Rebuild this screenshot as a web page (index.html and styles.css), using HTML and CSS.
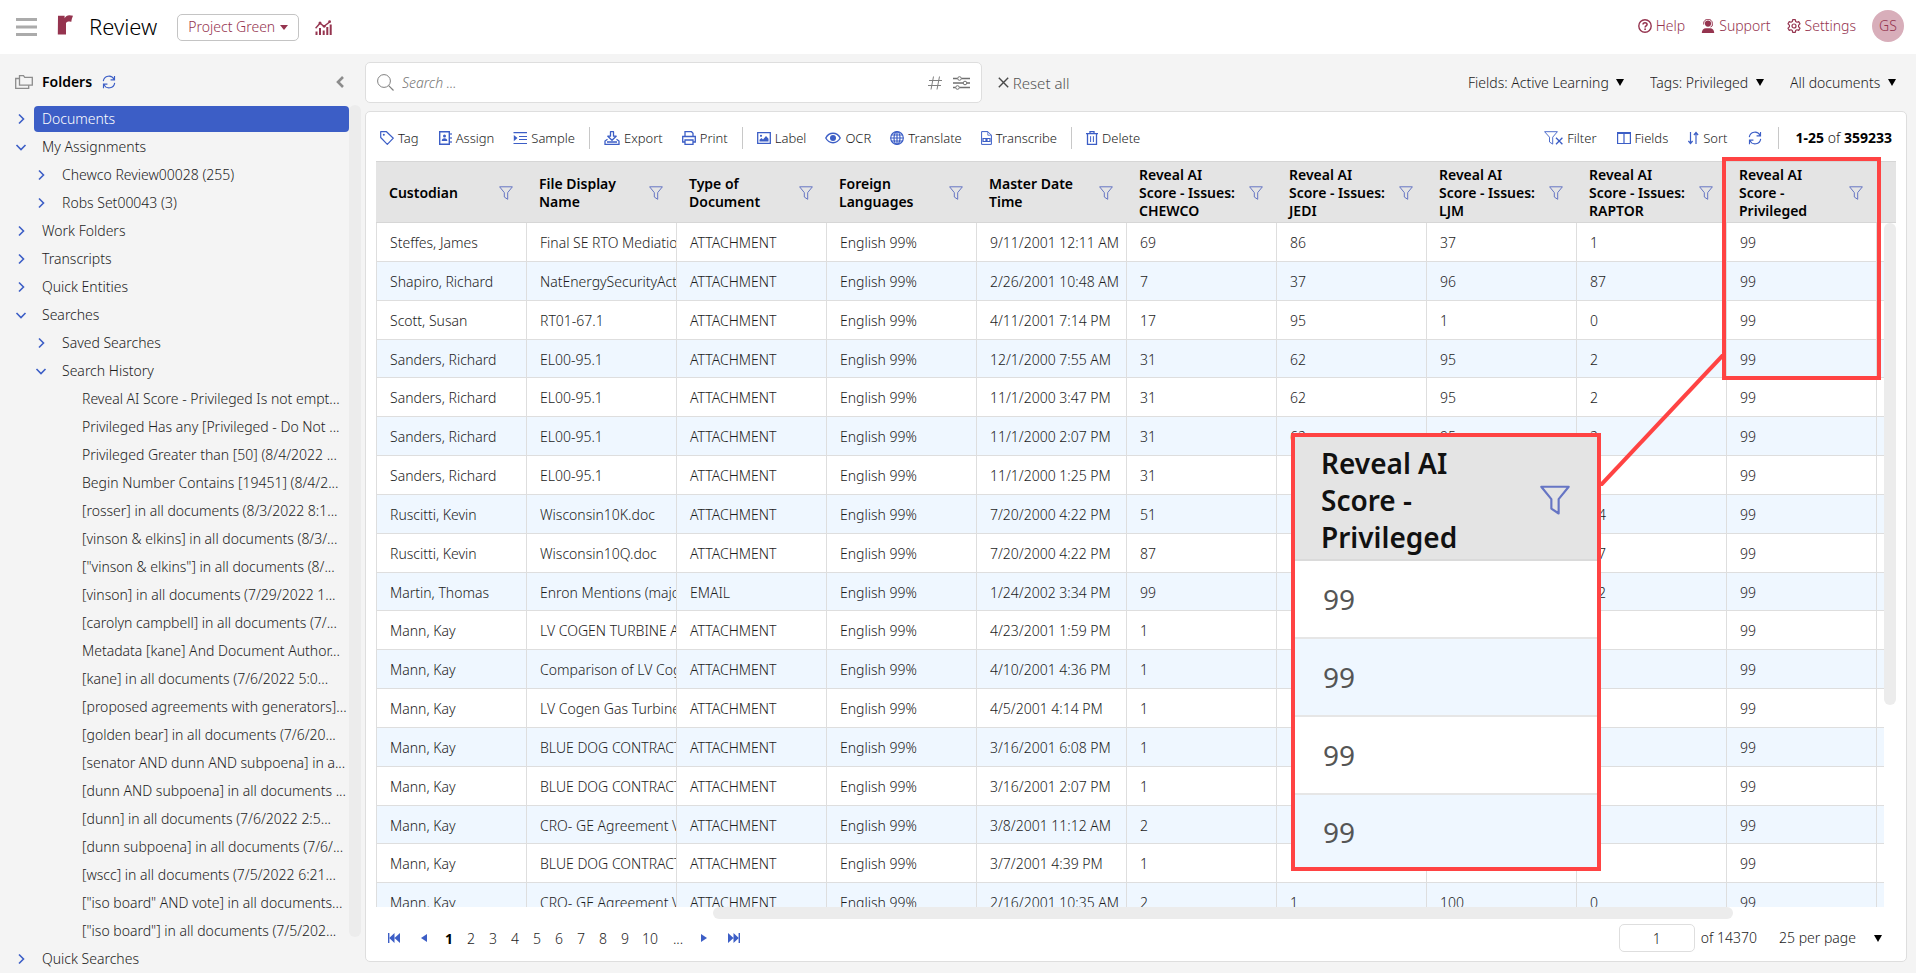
FILE: index.html
```html
<!DOCTYPE html>
<html lang="en">
<head>
<meta charset="utf-8">
<meta name="viewport" content="width=device-width, initial-scale=1">
<title>Review - Project Green</title>
<link rel="stylesheet" href="styles.css">
</head>
<body>
<svg class="sprite" aria-hidden="true">
  <symbol id="i-right" viewBox="0 0 14 14"><path d="M5 2.5 9.5 7 5 11.5" fill="none" stroke="currentColor" stroke-width="1.6"/></symbol>
  <symbol id="i-down" viewBox="0 0 14 14"><path d="M2.5 5 7 9.5 11.500 5" fill="none" stroke="currentColor" stroke-width="1.6"/></symbol>
  <symbol id="i-caret" viewBox="0 0 8 7"><path d="M0 0h8L4 7z" fill="currentColor"/></symbol>
  <symbol id="i-funnel" viewBox="0 0 14 14"><path d="M.6.8h12.800L8.700 6.600v6.700L5.300 11V6.600z" fill="none" stroke="currentColor" stroke-width="1" stroke-linejoin="round"/></symbol>
  <symbol id="i-refresh" viewBox="0 0 16 16"><path d="M1.500 7A6.500 6.500 0 0 1 13.800 5M14.500 9A6.500 6.500 0 0 1 2.200 11M14.300 1v4.500H9.800M1.700 15v-4.500h4.500" fill="none" stroke="currentColor" stroke-width="1.3"/></symbol>
</svg>

<div class="app">
  <header class="topbar">
    <button class="icon-btn" type="button" aria-label="Menu"><svg class="menu-icon" viewBox="0 0 21 18"><path d="M0 1.500h21M0 9h21M0 16.500h21" stroke="#ababab" stroke-width="3"/></svg></button>
    <svg class="logo" viewBox="0 0 16 20" role="img" aria-label="Reveal"><path d="M1 .8h6.600v2.500C8.600 1.200 10.300.2 12.300.2c1.400 0 2.700.2 3.700.5-.9 2-1.500 3.900-1.800 6.200C12.400 6.200 10.400 6.300 9 8v11.600H.8z" fill="#95344f"/></svg>
    <h1 class="app-name">Review</h1>
    <span class="project">
      <select aria-label="Project"><option>Project Green</option></select>
      <svg viewBox="0 0 8 5"><path d="M0 0h8L4 5z" fill="#95344f"/></svg>
    </span>
    <button class="icon-btn" type="button" aria-label="Dashboard"><svg class="chart-icon" viewBox="0 0 17 15"><path d="M1.500 15v-3.500M5 15V8M8.700 15v-4.500M12.300 15V7M15.700 15V4.500" stroke="#95344f" stroke-width="2" fill="none"/><path d="M.6 8.200 5 3.200l4 3.200 6-4.600" stroke="#95344f" stroke-width="1.400" fill="none"/><circle cx="5" cy="3" r="1.500" fill="#95344f"/><circle cx="9.200" cy="6.300" r="1.400" fill="#95344f"/><circle cx="14.600" cy="1.700" r="1.400" fill="#95344f"/></svg></button>
    <nav class="user-nav" aria-label="User">
      <a href="#help"><svg class="i14" viewBox="0 0 14 14"><circle cx="7" cy="7" r="6.200" fill="none" stroke="currentColor" stroke-width="1.400"/><path d="M5 5.600C5 4.300 5.900 3.700 7 3.700s2.100.7 2.100 1.800c0 1.400-2 1.500-2 2.900" fill="none" stroke="currentColor" stroke-width="1.500"/><circle cx="7.100" cy="10.200" r=".9" fill="currentColor"/></svg>Help</a>
      <a href="#support"><svg class="i14" viewBox="0 0 14 14"><circle cx="7" cy="4.600" r="3.100" fill="currentColor"/><path d="M2.700 5.500V4.200a4.300 4 0 0 1 8.600 0v2.600L9.500 8" fill="none" stroke="currentColor" stroke-width="1"/><path d="M.8 14c0-3.200 1.700-4.800 4.200-4.800h4c2.500 0 4.200 1.600 4.200 4.800z" fill="currentColor"/></svg>Support</a>
      <a href="#settings"><svg class="i14" viewBox="0 0 14 14"><path d="M5.700.7h2.600l.4 1.800 1.300.7 1.700-.6 1.300 2.300-1.400 1.200v1.800l1.400 1.200-1.300 2.300-1.700-.6-1.300.7-.4 1.800H5.700l-.4-1.800-1.300-.7-1.700.6L1 9.100l1.400-1.200V6.100L1 4.900l1.300-2.300 1.700.6 1.300-.7z" fill="none" stroke="currentColor" stroke-width="1.200" stroke-linejoin="round"/><circle cx="7" cy="7" r="2" fill="none" stroke="currentColor" stroke-width="1.200"/></svg>Settings</a>
      <button class="avatar" type="button" aria-label="Account GS">GS</button>
    </nav>
  </header>

  <div class="workspace">
    <aside class="sidebar">
      <div class="side-head">
        <svg class="folders-icon" viewBox="0 0 18 14"><path d="M4.500.7h4l1.200 1.600h7.600v7.900H4.500z" fill="none" stroke="#8c8c8c" stroke-width="1.300"/><path d="M4.500 3.500H.7v9.800h13v-3" fill="none" stroke="#8c8c8c" stroke-width="1.300"/></svg>
        <h2>Folders</h2>
        <button class="icon-btn blue" type="button" aria-label="Refresh folders"><svg class="i14"><use href="#i-refresh"/></svg></button>
        <button class="icon-btn collapse" type="button" aria-label="Collapse"><svg viewBox="0 0 8 12"><path d="M7 1 2 6l5 5" fill="none" stroke="#8c8c8c" stroke-width="2.600"/></svg></button>
      </div>
      <div class="tree-wrap">
        <ul class="tree">
          <li><div class="node"><button type="button" aria-label="Expand"><svg><use href="#i-right"/></svg></button><a class="active" href="#n">Documents</a></div></li>
          <li><div class="node"><button type="button" aria-label="Collapse"><svg><use href="#i-down"/></svg></button><a href="#n">My Assignments</a></div>
            <ul>
              <li><div class="node"><button type="button" aria-label="Expand"><svg><use href="#i-right"/></svg></button><a href="#n">Chewco Review00028 (255)</a></div></li>
              <li><div class="node"><button type="button" aria-label="Expand"><svg><use href="#i-right"/></svg></button><a href="#n">Robs Set00043 (3)</a></div></li>
            </ul>
          </li>
          <li><div class="node"><button type="button" aria-label="Expand"><svg><use href="#i-right"/></svg></button><a href="#n">Work Folders</a></div></li>
          <li><div class="node"><button type="button" aria-label="Expand"><svg><use href="#i-right"/></svg></button><a href="#n">Transcripts</a></div></li>
          <li><div class="node"><button type="button" aria-label="Expand"><svg><use href="#i-right"/></svg></button><a href="#n">Quick Entities</a></div></li>
          <li><div class="node"><button type="button" aria-label="Collapse"><svg><use href="#i-down"/></svg></button><a href="#n">Searches</a></div>
            <ul>
              <li><div class="node"><button type="button" aria-label="Expand"><svg><use href="#i-right"/></svg></button><a href="#n">Saved Searches</a></div></li>
              <li><div class="node"><button type="button" aria-label="Collapse"><svg><use href="#i-down"/></svg></button><a href="#n">Search History</a></div>
                <ul class="leaves">
                  <li><a href="#n">Reveal AI Score - Privileged Is not empt...</a></li>
                  <li><a href="#n">Privileged Has any [Privileged - Do Not ...</a></li>
                  <li><a href="#n">Privileged Greater than [50] (8/4/2022 ...</a></li>
                  <li><a href="#n">Begin Number Contains [19451] (8/4/2...</a></li>
                  <li><a href="#n">[rosser] in all documents (8/3/2022 8:1...</a></li>
                  <li><a href="#n">[vinson &amp; elkins] in all documents (8/3/...</a></li>
                  <li><a href="#n">["vinson &amp; elkins"] in all documents (8/...</a></li>
                  <li><a href="#n">[vinson] in all documents (7/29/2022 1...</a></li>
                  <li><a href="#n">[carolyn campbell] in all documents (7/...</a></li>
                  <li><a href="#n">Metadata [kane] And Document Author...</a></li>
                  <li><a href="#n">[kane] in all documents (7/6/2022 5:0...</a></li>
                  <li><a href="#n">[proposed agreements with generators]...</a></li>
                  <li><a href="#n">[golden bear] in all documents (7/6/20...</a></li>
                  <li><a href="#n">[senator AND dunn AND subpoena] in a...</a></li>
                  <li><a href="#n">[dunn AND subpoena] in all documents ...</a></li>
                  <li><a href="#n">[dunn] in all documents (7/6/2022 2:5...</a></li>
                  <li><a href="#n">[dunn subpoena] in all documents (7/6/...</a></li>
                  <li><a href="#n">[wscc] in all documents (7/5/2022 6:21...</a></li>
                  <li><a href="#n">["iso board" AND vote] in all documents...</a></li>
                  <li><a href="#n">["iso board"] in all documents (7/5/202...</a></li>
                </ul>
              </li>
            </ul>
          </li>
          <li><div class="node"><button type="button" aria-label="Expand"><svg><use href="#i-right"/></svg></button><a href="#n">Quick Searches</a></div></li>
        </ul>
        <div class="tree-thumb"></div>
      </div>
    </aside>

    <main class="main">
      <div class="searchrow">
        <div class="searchbox">
          <svg class="search-icon" viewBox="0 0 17 17"><circle cx="7" cy="7" r="6.400" fill="none" stroke="#808080"/><path d="m11.700 11.700 4.800 4.800" stroke="#808080" stroke-width="1.200"/></svg>
          <input type="text" placeholder="Search ..." aria-label="Search">
          <button class="icon-btn" type="button" aria-label="Number search"><svg class="hash-icon" viewBox="0 0 14 14"><path d="M5.500.5 3 13.500M11.500.5 9 13.500M1 4.500h13M0 9.500h13" stroke="#808080" fill="none"/></svg></button>
          <button class="icon-btn" type="button" aria-label="Search options"><svg class="sliders-icon" viewBox="0 0 17 14"><path d="M0 2.500h4.500M8.500 2.500H17M0 7h10M14 7h3M0 11.500h2.500M6.500 11.500H17" stroke="#707070" stroke-width="1.300"/><g fill="none" stroke="#707070"><circle cx="6.500" cy="2.500" r="1.800"/><circle cx="12" cy="7" r="1.800"/><circle cx="4.500" cy="11.500" r="1.800"/></g></svg></button>
        </div>
        <button class="reset" type="button"><svg viewBox="0 0 11 11"><path d="m.8.8 9.400 9.400M10.200.8.8 10.200" stroke="#4a4a4a" stroke-width="1.400"/></svg>Reset all</button>
        <div class="pickers">
          <span class="picker"><select aria-label="Fields profile"><option>Fields: Active Learning</option></select><svg><use href="#i-caret"/></svg></span>
          <span class="picker"><select aria-label="Tags profile"><option>Tags: Privileged</option></select><svg><use href="#i-caret"/></svg></span>
          <span class="picker"><select aria-label="Scope"><option>All documents</option></select><svg><use href="#i-caret"/></svg></span>
        </div>
      </div>

      <section class="panel">
        <div class="toolbar">
          <div class="group">
            <button type="button"><svg viewBox="0 0 14 14"><path d="M.7.7h5.800l6.800 6.500-6 6.100L.7 6.500z" fill="none" stroke="currentColor" stroke-width="1.200" stroke-linejoin="round"/><circle cx="3.800" cy="3.800" r="1" fill="currentColor"/></svg>Tag</button>
            <button type="button"><svg viewBox="0 0 14 14"><path d="M1.700.7h9.600v12.600H1.700z" fill="none" stroke="currentColor" stroke-width="1.400"/><path d="M13 2v2M13 6v2M13 10v2" stroke="currentColor" stroke-width="1.200"/><circle cx="6.500" cy="5" r="1.500" fill="currentColor"/><path d="M3.700 10c0-2 1-2.800 2.800-2.800S9.300 8 9.300 10z" fill="currentColor"/></svg>Assign</button>
            <button type="button"><svg viewBox="0 0 14 14"><path d="M.5 1.700H14M6 5.500h8M6 8.500h8M.5 12.500H14" stroke="currentColor" stroke-width="1.200"/><path d="M.8 4v6.200L4.500 7z" fill="currentColor"/></svg>Sample</button>
          </div>
          <div class="group">
            <button type="button"><svg class="w16" viewBox="0 0 16 14"><path d="M6.500.7h3v4.500h2.700L8 9.300 3.800 5.200h2.700z" fill="none" stroke="currentColor" stroke-width="1.300" stroke-linejoin="round"/><path d="M3.500 8.200 1 10v3.300h14V10l-2.500-1.800M3 11h10" fill="none" stroke="currentColor" stroke-width="1.300"/></svg>Export</button>
            <button type="button"><svg viewBox="0 0 14 14"><path d="M3 5V.7h6.500L11 2.200V5M3 11H.7V5.500h12.600V11H11" fill="none" stroke="currentColor" stroke-width="1.300"/><path d="M3 9h8v4.300H3z" fill="none" stroke="currentColor" stroke-width="1.300"/></svg>Print</button>
          </div>
          <div class="group">
            <button type="button"><svg viewBox="0 0 14 14"><path d="M.7 1.700h12.600v10.600H.7z" fill="none" stroke="currentColor" stroke-width="1.300"/><circle cx="4" cy="4.800" r="1.100" fill="currentColor"/><path d="M2.500 10.500V8.700L4.500 7l1.500 1.500L9 5l2.500 2.800v2.700z" fill="currentColor"/></svg>Label</button>
            <button type="button"><svg class="w16" viewBox="0 0 16 14"><path d="M.8 7C2.500 3.800 5 2.300 8 2.300S13.500 3.800 15.200 7C13.500 10.200 11 11.700 8 11.700S2.500 10.200.8 7z" fill="none" stroke="currentColor" stroke-width="1.400"/><circle cx="8" cy="7" r="3" fill="currentColor"/></svg>OCR</button>
            <button type="button"><svg viewBox="0 0 14 14"><g fill="none" stroke="currentColor" stroke-width="1.200"><circle cx="7" cy="7" r="6.300"/><ellipse cx="7" cy="7" rx="3" ry="6.300"/><path d="M7 .7v12.600M.7 7h12.600M1.500 4h11M1.500 10h11"/></g></svg>Translate</button>
            <button type="button"><svg class="w11" viewBox="0 0 11 14"><path d="M.6.6h6.200l3.600 3.600v9.200H.6z" fill="none" stroke="currentColor"/><path d="M6.800.6v3.600h3.600" fill="none" stroke="currentColor" stroke-width=".8"/><path d="M2 7.500h3v3H2zM6 7.500h3v3H6z" fill="none" stroke="currentColor" stroke-width="1.200"/></svg>Transcribe</button>
          </div>
          <div class="group">
            <button type="button"><svg class="w12" viewBox="0 0 12 14"><path d="M0 2.700h12M4 2.500V.7h4v1.800M1.500 3v10.300h9V3" fill="none" stroke="currentColor" stroke-width="1.300"/><path d="M4.600 5.200v5.800M7.400 5.200v5.800" stroke="currentColor"/></svg>Delete</button>
          </div>
          <div class="group end">
            <button type="button"><svg class="w19" viewBox="0 0 19 14"><path d="M.6.7h12.800L8.700 6.200v6.900L5.500 11V6.200z" fill="none" stroke="currentColor" stroke-width=".9"/><path d="m12 6.800 6.400 6.400M18.400 6.800 12 13.200" stroke="currentColor" stroke-width="1.300"/></svg>Filter</button>
            <button type="button"><svg viewBox="0 0 14 14"><path d="M.6 1.500h12.800v11H.6zM7 1.500v11" fill="none" stroke="currentColor" stroke-width="1.200"/><path d="M.6 2h12.800" stroke="currentColor" stroke-width="2"/></svg>Fields</button>
            <button type="button"><svg class="w11" viewBox="0 0 11 14"><path d="M2.500 1v11M.4 10l2.100 2.500L4.600 10M8 13V2M5.900 4 8 1.500 10.100 4" fill="none" stroke="currentColor" stroke-width="1.200"/></svg>Sort</button>
            <button type="button" aria-label="Refresh"><svg><use href="#i-refresh"/></svg></button>
          </div>
          <p class="count"><b>1-25</b> of <b>359233</b></p>
        </div>

        <div class="grid-clip">
          <table class="grid">
            <colgroup><col span="10" class="c-field"><col></colgroup>
            <thead>
              <tr>
                <th><div><span>Custodian</span><svg><use href="#i-funnel"/></svg></div></th>
                <th><div><span>File Display Name</span><svg><use href="#i-funnel"/></svg></div></th>
                <th><div><span>Type of Document</span><svg><use href="#i-funnel"/></svg></div></th>
                <th><div><span>Foreign Languages</span><svg><use href="#i-funnel"/></svg></div></th>
                <th><div><span>Master Date Time</span><svg><use href="#i-funnel"/></svg></div></th>
                <th><div><span>Reveal AI Score - Issues: CHEWCO</span><svg><use href="#i-funnel"/></svg></div></th>
                <th><div><span>Reveal AI Score - Issues: JEDI</span><svg><use href="#i-funnel"/></svg></div></th>
                <th><div><span>Reveal AI Score - Issues: LJM</span><svg><use href="#i-funnel"/></svg></div></th>
                <th><div><span>Reveal AI Score - Issues: RAPTOR</span><svg><use href="#i-funnel"/></svg></div></th>
                <th><div><span>Reveal AI Score - Privileged</span><svg><use href="#i-funnel"/></svg></div></th>
                <th></th>
              </tr>
            </thead>
            <tbody>
              <tr><td>Steffes, James</td><td>Final SE RTO Mediation</td><td>ATTACHMENT</td><td>English 99%</td><td>9/11/2001 12:11 AM</td><td>69</td><td>86</td><td>37</td><td>1</td><td>99</td><td></td></tr>
              <tr><td>Shapiro, Richard</td><td>NatEnergySecurityAct</td><td>ATTACHMENT</td><td>English 99%</td><td>2/26/2001 10:48 AM</td><td>7</td><td>37</td><td>96</td><td>87</td><td>99</td><td></td></tr>
              <tr><td>Scott, Susan</td><td>RT01-67.1</td><td>ATTACHMENT</td><td>English 99%</td><td>4/11/2001 7:14 PM</td><td>17</td><td>95</td><td>1</td><td>0</td><td>99</td><td></td></tr>
              <tr><td>Sanders, Richard</td><td>EL00-95.1</td><td>ATTACHMENT</td><td>English 99%</td><td>12/1/2000 7:55 AM</td><td>31</td><td>62</td><td>95</td><td>2</td><td>99</td><td></td></tr>
              <tr><td>Sanders, Richard</td><td>EL00-95.1</td><td>ATTACHMENT</td><td>English 99%</td><td>11/1/2000 3:47 PM</td><td>31</td><td>62</td><td>95</td><td>2</td><td>99</td><td></td></tr>
              <tr><td>Sanders, Richard</td><td>EL00-95.1</td><td>ATTACHMENT</td><td>English 99%</td><td>11/1/2000 2:07 PM</td><td>31</td><td>62</td><td>95</td><td>2</td><td>99</td><td></td></tr>
              <tr><td>Sanders, Richard</td><td>EL00-95.1</td><td>ATTACHMENT</td><td>English 99%</td><td>11/1/2000 1:25 PM</td><td>31</td><td></td><td></td><td></td><td>99</td><td></td></tr>
              <tr><td>Ruscitti, Kevin</td><td>Wisconsin10K.doc</td><td>ATTACHMENT</td><td>English 99%</td><td>7/20/2000 4:22 PM</td><td>51</td><td></td><td></td><td>14</td><td>99</td><td></td></tr>
              <tr><td>Ruscitti, Kevin</td><td>Wisconsin10Q.doc</td><td>ATTACHMENT</td><td>English 99%</td><td>7/20/2000 4:22 PM</td><td>87</td><td></td><td></td><td>17</td><td>99</td><td></td></tr>
              <tr><td>Martin, Thomas</td><td>Enron Mentions (major)</td><td>EMAIL</td><td>English 99%</td><td>1/24/2002 3:34 PM</td><td>99</td><td></td><td></td><td>12</td><td>99</td><td></td></tr>
              <tr><td>Mann, Kay</td><td>LV COGEN TURBINE A</td><td>ATTACHMENT</td><td>English 99%</td><td>4/23/2001 1:59 PM</td><td>1</td><td></td><td></td><td></td><td>99</td><td></td></tr>
              <tr><td>Mann, Kay</td><td>Comparison of LV Cogen</td><td>ATTACHMENT</td><td>English 99%</td><td>4/10/2001 4:36 PM</td><td>1</td><td></td><td></td><td></td><td>99</td><td></td></tr>
              <tr><td>Mann, Kay</td><td>LV Cogen Gas Turbine</td><td>ATTACHMENT</td><td>English 99%</td><td>4/5/2001 4:14 PM</td><td>1</td><td></td><td></td><td></td><td>99</td><td></td></tr>
              <tr><td>Mann, Kay</td><td>BLUE DOG CONTRACT</td><td>ATTACHMENT</td><td>English 99%</td><td>3/16/2001 6:08 PM</td><td>1</td><td></td><td></td><td></td><td>99</td><td></td></tr>
              <tr><td>Mann, Kay</td><td>BLUE DOG CONTRACT</td><td>ATTACHMENT</td><td>English 99%</td><td>3/16/2001 2:07 PM</td><td>1</td><td></td><td></td><td></td><td>99</td><td></td></tr>
              <tr><td>Mann, Kay</td><td>CRO- GE Agreement V</td><td>ATTACHMENT</td><td>English 99%</td><td>3/8/2001 11:12 AM</td><td>2</td><td></td><td></td><td></td><td>99</td><td></td></tr>
              <tr><td>Mann, Kay</td><td>BLUE DOG CONTRACT</td><td>ATTACHMENT</td><td>English 99%</td><td>3/7/2001 4:39 PM</td><td>1</td><td></td><td></td><td></td><td>99</td><td></td></tr>
              <tr><td>Mann, Kay</td><td>CRO- GE Agreement V</td><td>ATTACHMENT</td><td>English 99%</td><td>2/16/2001 10:35 AM</td><td>2</td><td>1</td><td>100</td><td>0</td><td>99</td><td></td></tr>
            </tbody>
          </table>
          <div class="vtrack"><div class="vthumb"></div></div>
        </div>
        <div class="htrack"><div class="hthumb"></div></div>

        <footer class="pager">
          <nav class="pages" aria-label="Pages">
            <button class="step" type="button" aria-label="First page"><svg class="w12" viewBox="0 0 12 10"><path d="M.7 0v10" stroke="currentColor" stroke-width="1.400"/><path d="M6.500 0v10L1.200 5zM12 0v10L6.500 5z" fill="currentColor"/></svg></button>
            <button class="step" type="button" aria-label="Previous page"><svg class="w6" viewBox="0 0 6 8"><path d="M6 0v8L0 4z" fill="currentColor"/></svg></button>
            <button type="button" class="current" aria-current="page">1</button><button type="button">2</button><button type="button">3</button><button type="button">4</button><button type="button">5</button><button type="button">6</button><button type="button">7</button><button type="button">8</button><button type="button">9</button><button type="button">10</button><button type="button" class="more">...</button>
            <button class="step" type="button" aria-label="Next page"><svg class="w6" viewBox="0 0 6 8"><path d="M0 0v8l6-4z" fill="currentColor"/></svg></button>
            <button class="step" type="button" aria-label="Last page"><svg class="w12" viewBox="0 0 12 10"><path d="M11.300 0v10" stroke="currentColor" stroke-width="1.400"/><path d="M0 0v10l5.500-5zM5.500 0v10l5.300-5z" fill="currentColor"/></svg></button>
          </nav>
          <label class="goto"><input type="text" value="1" aria-label="Page number"> of 14370</label>
          <span class="picker size"><select aria-label="Page size"><option>25 per page</option></select><svg><use href="#i-caret"/></svg></span>
        </footer>

        <div class="highlight"></div>
        <svg class="connector" viewBox="0 0 124 132"><path d="M0 132 124 0" stroke="#ff4343" stroke-width="4"/></svg>
        <table class="inset">
          <thead><tr><th><div><span>Reveal AI Score - Privileged</span><svg><use href="#i-funnel"/></svg></div></th></tr></thead>
          <tbody><tr><td>99</td></tr><tr><td>99</td></tr><tr><td>99</td></tr><tr><td>99</td></tr></tbody>
        </table>
      </section>
    </main>
  </div>
</div>
</body>
</html>
```
FILE: styles.css
```css
* { box-sizing: border-box; }

:root {
  --blue: #3c5ec6;
  --wine: #95344f;
  --line: #dedede;
  --text: #1c1c1c;
  --red: #ff4343;
}

body {
  margin: 0;
  background: #fff;
  color: var(--text);
  font: 300 14px/18px "Noto Sans", sans-serif;
}

button, input, select { font: inherit; color: inherit; }
button { padding: 0; border: 0; background: none; cursor: pointer; }
select { padding: 0; border: 0; background: none; appearance: none; outline: 0; }
a { color: inherit; text-decoration: none; }
h1, h2, p, ul { margin: 0; padding: 0; }
ul { list-style: none; }
svg { display: block; flex: none; }

.sprite { position: absolute; width: 0; height: 0; }
.icon-btn { display: flex; align-items: center; }
.blue { color: var(--blue); }
.i14 { width: 14px; height: 14px; }

.app { display: flex; flex-direction: column; height: 100vh; padding-bottom: 2px; }

/* Top bar */
.topbar { display: flex; align-items: center; flex: none; height: 54px; padding: 0 16px; }
.menu-icon { width: 21px; height: 18px; }
.logo { width: 16px; height: 20px; margin: 0 16px 4px 20px; }
.app-name { padding-bottom: 2px; color: #000; font-size: 22px; font-weight: 300; line-height: 30px; }
.project {
  display: flex; align-items: center; gap: 5px;
  height: 27px; margin: 0 16px 0 20px; padding: 0 10px;
  border: 1px solid #c4c4c4; border-radius: 5px; color: var(--wine);
}
.project svg { width: 8px; height: 5px; }
.chart-icon { width: 17px; height: 15px; }
.user-nav { display: flex; align-items: center; gap: 16px; margin-left: auto; padding-bottom: 2px; color: var(--wine); }
.user-nav a { display: flex; align-items: center; gap: 4px; }
.avatar { width: 32px; height: 32px; border-radius: 50%; background: #d8aeba; color: var(--wine); }

/* Workspace */
.workspace { display: flex; flex: 1; min-height: 0; margin-right: 4px; background: #f4f4f4; }
.sidebar { flex: none; width: 365px; padding: 0 4px 0 14px; overflow: hidden; }
.side-head { display: flex; align-items: center; height: 51px; padding-top: 4px; }
.folders-icon { width: 18px; height: 14px; margin: 0 9px 0 1px; }
.side-head h2 { margin-right: 10px; color: #000; font-size: 14px; font-weight: 600; }
.collapse { margin: 0 17px 0 auto; }
.collapse svg { width: 8px; height: 12px; }

.tree-wrap { position: relative; padding-right: 12px; }
.tree-thumb { position: absolute; top: 0; right: 0; bottom: 36px; width: 12px; border-radius: 6px; background: #ececec; }
.tree ul { padding-left: 20px; }
.node { display: flex; align-items: center; gap: 6px; height: 28px; }
.node button { color: var(--blue); }
.node button svg { width: 14px; height: 14px; }
.node a { flex: 1; padding: 0 8px; border-radius: 4px; line-height: 26px; white-space: nowrap; }
.node a.active { background: var(--blue); color: #fff; }
.leaves a { display: block; padding-left: 28px; line-height: 28px; white-space: nowrap; }

.main { display: flex; flex: 1; flex-direction: column; gap: 8px; min-width: 0; padding: 8px 9px 11px 0; }

/* Search row */
.searchrow { display: flex; align-items: center; flex: none; }
.searchbox {
  display: flex; align-items: center; flex: 0 1 40%; height: 41px; padding: 0 11px;
  border: 1px solid var(--line); border-radius: 5px; background: #fff;
}
.search-icon { width: 17px; height: 17px; margin-right: 8px; }
.searchbox input { flex: 1; min-width: 0; padding: 0; border: 0; outline: 0; background: none; }
.searchbox input::placeholder { color: #777; font-style: italic; opacity: 1; }
.hash-icon { width: 14px; height: 14px; margin-right: 11px; }
.sliders-icon { width: 17px; height: 14px; }
.reset { display: flex; align-items: center; gap: 4px; margin-left: 16px; color: #555; font-size: 15px; }
.reset svg { width: 11px; height: 11px; }
.pickers { display: flex; gap: 26px; margin-left: auto; padding-right: 11px; }
.picker { display: flex; align-items: center; gap: 7px; }
.picker svg { width: 8px; height: 7px; color: #000; }

/* Document panel */
.panel {
  position: relative; display: flex; flex: 1; flex-direction: column; min-height: 0;
  padding: 0 10px; border: 1px solid var(--line); border-radius: 5px; background: #fff;
}
.toolbar { display: flex; align-items: center; flex: none; height: 49px; padding: 2px 4px 0; font-size: 13px; }
.group { display: flex; align-items: center; gap: 19px; height: 22px; }
.group:not(.end) + .group:not(.end) { margin-left: 14px; padding-left: 14px; border-left: 1px solid #c8c8c8; }
.group button { display: flex; align-items: center; gap: 4px; }
.group svg { width: 14px; height: 14px; color: var(--blue); }
.group .w16 { width: 16px; }
.group .w19 { width: 19px; }
.group .w11 { width: 11px; }
.group .w12 { width: 12px; }
.end { gap: 20px; margin-left: auto; }
.count { margin-left: 16px; padding-left: 17px; border-left: 1px solid #c8c8c8; font-size: 14px; line-height: 22px; }
.count b { color: #000; font-weight: 700; }

.grid-clip { position: relative; flex: 1; min-height: 0; overflow: hidden; }
.grid { width: 100%; min-width: 1520px; border-collapse: separate; border-spacing: 0; table-layout: fixed; }
.c-field { width: 150px; }
.grid th {
  height: 62px; padding: 1px 13px 0; border-top: 1px solid #d6d6d6; border-bottom: 1px solid #d6d6d6;
  background: #e4e4e4; color: #000; font-weight: 600; text-align: left;
}
.grid th div { display: flex; align-items: center; justify-content: space-between; }
.grid th span { flex: 0 1 102px; }
.grid th svg { width: 14px; height: 14px; color: #6675c4; }
.grid td {
  height: 39px; padding: 2px 0 0 13px; overflow: hidden;
  border-left: 1px solid var(--line); border-bottom: 1px solid var(--line); white-space: nowrap;
}
.grid tbody tr:nth-child(6n + 4) td { height: 38px; }
.grid tbody tr:nth-child(even) { background: #eff7ff; }
.vtrack { position: absolute; top: 62px; right: 0; bottom: 0; width: 12px; background: #fff; }
.vthumb { height: 482px; border-radius: 6px; background: #ececec; }
.htrack { flex: none; height: 12px; padding: 0 163px 0 337px; }
.hthumb { height: 12px; border-radius: 6px; background: #ececec; }

/* Pager */
.pager { display: flex; align-items: center; flex: none; height: 42px; padding: 0 14px 4px 12px; }
.pages { display: flex; align-items: center; }
.pages button { min-width: 22px; height: 20px; padding: 2px 6px 0; }
.pages .current { margin-left: 8px; color: #000; font-weight: 700; }
.pages .more { width: 34px; padding-right: 12px; }
.pages .step { display: flex; align-items: center; justify-content: center; width: 12px; min-width: 12px; padding: 0; color: var(--blue); }
.pages .step + .step { margin-left: 18px; }
.pages .w12 { width: 12px; height: 10px; }
.pages .w6 { width: 6px; height: 8px; }
.goto { display: flex; align-items: center; gap: 6px; margin-left: auto; }
.goto input { width: 76px; height: 28px; border: 1px solid var(--line); border-radius: 5px; text-align: center; }
.size { gap: 18px; margin-left: 22px; }

/* Callout over the grid */
.highlight { position: absolute; top: 45px; right: 25px; width: 159px; height: 223px; border: 4px solid var(--red); }
.connector { position: absolute; top: 242px; right: 182px; width: 124px; height: 132px; }
.inset {
  position: absolute; top: 321px; right: 305px; width: 310px; table-layout: fixed;
  border: 4px solid var(--red); border-spacing: 0; background: #fff; font-size: 28px; line-height: 37px;
}
.inset th { height: 124px; padding: 4px 27px 0 26px; border-bottom: 2px solid #dadada; background: #e4e4e4; color: #111; font-weight: 600; text-align: left; }
.inset th div { display: flex; align-items: center; justify-content: space-between; }
.inset th span { width: 160px; }
.inset th svg { width: 30px; height: 30px; color: #6675c4; }
.inset td { height: 78px; padding: 0 28px; border-bottom: 2px solid #e6e6e6; color: #555; font-weight: 400; }
.inset tr:last-child td { height: 72px; padding-top: 2px; border-bottom: 0; }
.inset tbody tr:nth-child(even) { background: #eff7ff; }
```
